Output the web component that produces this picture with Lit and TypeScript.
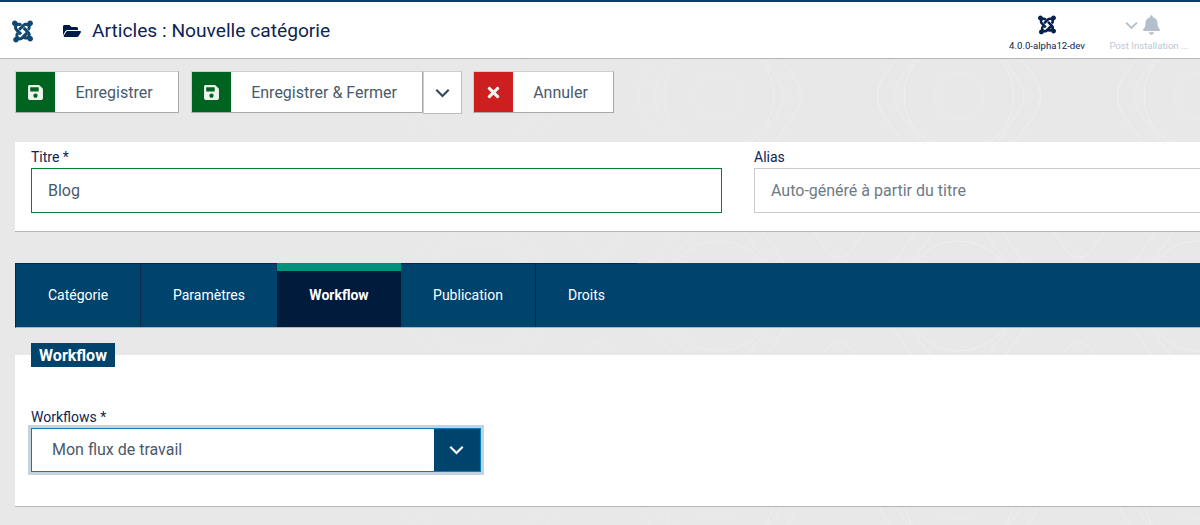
import { LitElement, html, css, svg } from "lit";
import { customElement } from "lit/decorators.js";

const JOOMLA = "M.6 92.1C.6 58.8 27.4 32 60.4 32c30 0 54.5 21.9 59.2 50.2 32.6-7.6 67.1.6 96.5 30l-44.3 44.3c-20.5-20.5-42.6-16.3-55.4-3.5-14.3 14.3-14.3 37.9 0 52.2l99.5 99.5-44 44.3c-87.7-87.2-49.7-49.7-99.8-99.7-26.8-26.5-35-64.8-24.8-98.9C20.4 144.6.6 120.7.6 92.1zm129.5 116.4l44.3 44.3c10-10 89.7-89.7 99.7-99.8 14.3-14.3 37.6-14.3 51.9 0 12.8 12.8 17 35-3.5 55.4l44 44.3c31.2-31.2 38.5-67.6 28.9-101.2 29.2-4.1 51.9-29.2 51.9-59.5 0-33.2-26.8-60.1-59.8-60.1-30.3 0-55.4 22.5-59.5 51.6-33.8-9.9-71.7-1.5-98.3 25.1-18.3 19.1-71.1 71.5-99.6 99.9zm266.3 152.2c8.2-32.7-.9-68.5-26.3-93.9-11.8-12.2 5 4.7-99.5-99.7l-44.3 44.3 99.7 99.7c14.3 14.3 14.3 37.6 0 51.9-12.8 12.8-35 17-55.4-3.5l-44 44.3c27.6 30.2 68 38.8 102.7 28 5.5 27.4 29.7 48.1 58.9 48.1 33 0 59.8-26.8 59.8-60.1 0-30.2-22.5-55-51.6-58.9zM296 279.4c-10 10-89.7 89.7-99.7 99.8-14.3 14.3-37.6 14.3-51.9 0-12.8-12.8-17-35 3.5-55.4l-44.3-44.3c-29.1 29.1-37.9 67.6-27.9 103.1-28.6 4.5-50.2 29.2-50.2 58.8 0 33.2 26.8 60.1 59.8 60.1 28.6 0 52.5-19.8 58.9-46.7 34 8.1 68.7-.9 94.5-26.8l99.7-99.7z";
const FOLDER = "M572.694 292.093L500.27 416.248A63.997 63.997 0 0 1 444.989 448H45.025c-18.523 0-30.064-20.093-20.731-36.093l72.424-124.155A64 64 0 0 1 152 256h399.964c18.523 0 30.064 20.093 20.73 36.093zM152 224h328v-48c0-26.51-21.49-48-48-48H272l-64-64H48C21.49 64 0 85.49 0 112v278.046l69.077-118.418C86.214 242.25 117.989 224 152 224z";
const SAVE = "M433.941 129.941l-83.882-83.882A48 48 0 0 0 316.118 32H48C21.49 32 0 53.49 0 80v352c0 26.51 21.49 48 48 48h352c26.51 0 48-21.49 48-48V163.882a48 48 0 0 0-14.059-33.941zM224 416c-35.346 0-64-28.654-64-64 0-35.346 28.654-64 64-64s64 28.654 64 64c0 35.346-28.654 64-64 64zm96-304.52V212c0 6.627-5.373 12-12 12H76c-6.627 0-12-5.373-12-12V108c0-6.627 5.373-12 12-12h228.52c3.183 0 6.235 1.264 8.485 3.515l3.48 3.48A11.996 11.996 0 0 1 320 111.48z";
const TIMES = "M242.72 256l100.07-100.07c12.28-12.28 12.28-32.19 0-44.48l-22.24-22.24c-12.28-12.28-32.19-12.28-44.48 0L176 189.28 75.93 89.21c-12.28-12.28-32.19-12.28-44.48 0L9.21 111.45c-12.28 12.28-12.28 32.19 0 44.48L109.28 256 9.21 356.07c-12.28 12.28-12.28 32.19 0 44.48l22.24 22.24c12.28 12.28 32.2 12.28 44.48 0L176 322.72l100.07 100.07c12.28 12.28 32.2 12.28 44.48 0l22.24-22.24c12.28-12.28 12.28-32.19 0-44.48L242.72 256z";
const BELL = "M224 512c35.32 0 63.97-28.65 63.97-64H160.03c0 35.35 28.65 64 63.97 64zm215.39-149.71c-19.32-20.76-55.47-51.99-55.47-154.29 0-77.7-54.48-139.9-127.94-155.16V32c0-17.67-14.32-32-31.98-32s-31.98 14.33-31.98 32v20.84C118.56 68.1 64.08 130.3 64.08 208c0 102.3-36.15 133.53-55.47 154.29-6 6.45-8.66 14.16-8.61 21.71.11 16.4 12.98 32 32.1 32h383.8c19.12 0 32-15.6 32.1-32 .05-7.55-2.61-15.27-8.61-21.71z";

const icon = (d: string, vb: string, cls: string) =>
  html`<svg class=${cls} viewBox=${vb} aria-hidden="true"><path fill="currentColor" d=${d}></path></svg>`;
const chevron = (cls: string) =>
  html`<svg class=${cls} viewBox="0 0 14 9" aria-hidden="true"><path d="M1.2 1.4 7 7.2l5.8-5.8" fill="none" stroke="currentColor" stroke-width="2"></path></svg>`;

/* Rounded rhombus of the faint background texture */
function rhomb(cx: number, cy: number, w: number, h: number, t = 0.16): string {
  const a = [[cx + w, cy], [cx, cy + h], [cx - w, cy], [cx, cy - h]];
  let d = "";
  a.forEach((p, i) => {
    const prev = a[(i + 3) % 4];
    const next = a[(i + 1) % 4];
    const sx = p[0] + (prev[0] - p[0]) * t;
    const sy = p[1] + (prev[1] - p[1]) * t;
    const ex = p[0] + (next[0] - p[0]) * t;
    const ey = p[1] + (next[1] - p[1]) * t;
    d += `${i === 0 ? "M" : "L"}${sx} ${sy}Q${p[0]} ${p[1]} ${ex} ${ey}`;
  });
  return d + "Z";
}

function texture() {
  const out = [];
  for (let i = -3; i <= 1; i++) {
    for (let j = -1; j <= 2; j++) {
      const x = 959 + 240 * i;
      const y = 96 + 200 * j;
      out.push(svg`<path d=${rhomb(x, y, 89, 125)}></path>`);
      out.push(svg`<path d=${rhomb(x, y, 71, 100)}></path>`);
      out.push(svg`<path d=${rhomb(x - 120, y + 104, 48, 68, 0.3)}></path>`);
      out.push(svg`<circle cx=${x} cy=${y} r="55"></circle>`);
      out.push(svg`<circle class="faint" cx=${x} cy=${y} r="24"></circle>`);
    }
  }
  return out;
}

@customElement("app-root")
export class AppRoot extends LitElement {
  static styles = css`
    :host { display: block; position: relative; width: 1200px; height: 525px; overflow: hidden; background: #e8e8e8; font-family: Roboto, "Liberation Sans", sans-serif; color: #495057; }
    .texture { position: absolute; inset: 0; width: 1200px; height: 525px; -webkit-mask-image: linear-gradient(to right, transparent 250px, #000 900px); mask-image: linear-gradient(to right, transparent 250px, #000 900px); }
    .texture * { fill: none; stroke: #efefef; stroke-width: 1; }
    .texture .faint { stroke: #ebebeb; }
    .page { position: relative; display: flex; flex-direction: column; }

    header { height: 56px; background: #fff; border-top: 2px solid #00446e; border-bottom: 1px solid #b5b5b5; display: flex; align-items: center; padding-left: 12px; color: #0c2454; }
    .logo { width: 21px; height: 24px; color: #10476f; margin-top: 1px; }
    .folder { width: 18px; height: 16px; color: #001b47; margin-left: 30px; margin-top: 1px; }
    h1 { margin: 2px 0 0 11px; font-size: 19.2px; font-weight: 400; color: #0c2454; line-height: 24px; flex: 1; }
    .status { width: 98px; height: 100%; display: flex; flex-direction: column; align-items: center; font-size: 9.6px; margin-right: 2px; }
    .status .logo2 { width: 18px; height: 21px; color: #04204f; margin-top: 12px; }
    .status span { margin-top: 5px; line-height: 12px; white-space: nowrap; }
    .post { width: 102px; margin-right: 0; color: #b9c3d0; }
    .post .row { display: flex; align-items: center; justify-content: center; height: 21px; margin-top: 12px; padding-right: 14px; gap: 5px; box-sizing: border-box; width: 100%; }
    .post .row .chev { width: 13px; height: 9px; color: #b3bfcc; margin-top: 2px; }
    .post .row .bell { width: 17px; height: 20px; color: #b3bfcc; }
    .post span { color: #c0c8d2; }

    .toolbar { display: flex; padding: 12px 0 0 15px; height: 42px; }
    .btn { display: flex; height: 42px; box-sizing: border-box; background: #fff; border: 1px solid #cfcfcf; border-right-color: #a9a9a9; border-bottom-color: #a9a9a9; font-size: 16px; color: #495a6b; }
    .btn .ic { width: 39px; flex: none; display: flex; align-items: center; justify-content: center; color: #eef5ee; }
    .green .ic { background: #006421; }
    .red .ic { background: #cd1f1f; }
    .btn .ic svg { width: 15px; height: 17px; }
    .btn .lab { display: flex; align-items: center; justify-content: center; flex: 1; padding-right: 5px; }
    .save { width: 164px; margin-right: 12px; }
    .saveclose { width: 232px; }
    .more { width: 39px; height: 43px; box-sizing: border-box; background: #fff; border: 1px solid #cfcfcf; border-right-color: #bdbdbd; border-bottom-color: #bdbdbd; display: flex; align-items: center; justify-content: center; color: #35465a; margin-right: 11px; }
    .more svg { width: 15px; height: 10px; }
    .cancel { width: 141px; }

    .card { background: #fff; border-bottom: 1px solid #b5b5b5; margin-left: 15px; }
    .fields { margin-top: 29px; height: 89px; display: flex; padding-left: 16px; gap: 32px; box-sizing: content-box; }
    .field { display: flex; flex-direction: column; }
    .field label { font-size: 14px; line-height: 16px; margin-top: 7px; height: 19px; color: #0c2454; }
    .input { box-sizing: border-box; height: 45px; font-size: 16px; display: flex; align-items: center; padding-left: 16px; background: #fff; }
    .title { width: 691px; }
    .title .input { border: 1px solid #008030; color: #495a6b; }
    .alias { flex: 1; margin-right: -4px; }
    .alias .input { border: 1px solid #cbcbcb; border-right: none; color: #6e7a85; }

    .tabs { margin: 31px 0 0 15px; height: 65px; box-sizing: border-box; background: #00446e; display: flex; border-bottom: 1px solid #b5b5b5; border-left: 1px solid #05284e; font-size: 14px; color: #fff; }
    .tab { display: flex; align-items: center; justify-content: center; border-right: 1px solid #05284e; box-sizing: border-box; border-top: 1px solid #05284e; padding-bottom: 1px; }
    .tab.active { background: #001b3b; border-right: none; font-weight: 700; border-top: 8px solid #00917b; padding-bottom: 8px; margin-left: -1px; }
    .t1 { width: 125px; } .t2 { width: 137px; } .t3 { width: 124px; } .t4 { width: 135px; } .t5 { width: 101px; border-right: none; }

    .panel { margin-top: 27px; height: 152px; position: relative; box-sizing: border-box; padding-left: 16px; }
    .legend { position: absolute; left: 16px; top: -12px; height: 24px; width: 84px; background: #00446e; color: #fff; font-weight: 700; font-size: 16px; line-height: 26px; text-align: center; }
    .panel label { display: block; padding-top: 54px; font-size: 14px; line-height: 16px; height: 19px; color: #0c2454; }
    .select { box-sizing: border-box; width: 450px; height: 44px; border: 1px solid #0a7ebb; outline: 3px solid #c4d3de; display: flex; font-size: 16px; color: #495a6b; background: #fff; }
    .select .val { flex: 1; display: flex; align-items: center; padding: 0 0 2px 20px; }
    .select .arrow { width: 46px; background: #00446e; display: flex; align-items: center; justify-content: center; color: #fff; padding-right: 2px; box-sizing: border-box; }
    .select .arrow svg { width: 15px; height: 10px; }
  `;

  render() {
    return html`
      <svg class="texture" viewBox="0 0 1200 525" aria-hidden="true">${texture()}</svg>
      <div class="page">
        <header>
          ${icon(JOOMLA, "0 0 448 512", "logo")}
          ${icon(FOLDER, "0 0 576 512", "folder")}
          <h1>Articles : Nouvelle catégorie</h1>
          <div class="status">
            ${icon(JOOMLA, "0 0 448 512", "logo2")}
            <span>4.0.0-alpha12-dev</span>
          </div>
          <div class="status post">
            <div class="row">${chevron("chev")}${icon(BELL, "0 0 448 512", "bell")}</div>
            <span>Post Installation ...</span>
          </div>
        </header>

        <div class="toolbar">
          <div class="btn green save"><div class="ic">${icon(SAVE, "0 0 448 512", "")}</div><div class="lab">Enregistrer</div></div>
          <div class="btn green saveclose"><div class="ic">${icon(SAVE, "0 0 448 512", "")}</div><div class="lab">Enregistrer &amp; Fermer</div></div>
          <div class="more">${chevron("")}</div>
          <div class="btn red cancel"><div class="ic">${icon(TIMES, "0 0 352 512", "")}</div><div class="lab">Annuler</div></div>
        </div>

        <div class="card fields">
          <div class="field title"><label>Titre *</label><div class="input">Blog</div></div>
          <div class="field alias"><label>Alias</label><div class="input">Auto-généré à partir du titre</div></div>
        </div>

        <nav class="tabs">
          <div class="tab t1">Catégorie</div>
          <div class="tab t2">Paramètres</div>
          <div class="tab t3 active">Workflow</div>
          <div class="tab t4">Publication</div>
          <div class="tab t5">Droits</div>
        </nav>

        <section class="card panel">
          <div class="legend">Workflow</div>
          <label>Workflows *</label>
          <div class="select"><div class="val">Mon flux de travail</div><div class="arrow">${chevron("")}</div></div>
        </section>
      </div>
    `;
  }
}
